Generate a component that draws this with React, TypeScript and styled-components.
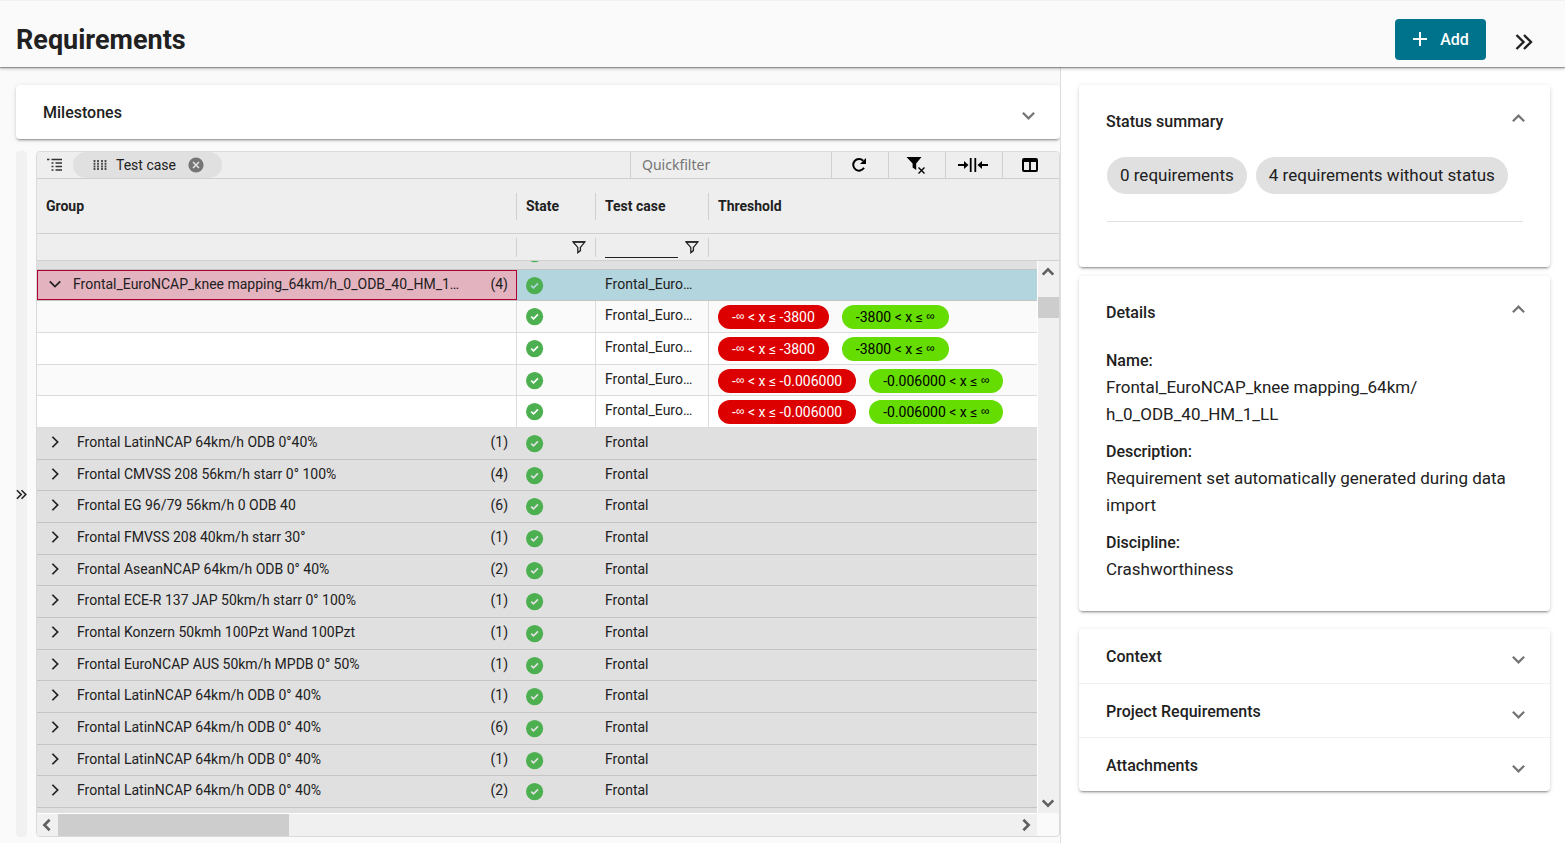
import React from 'react';
import styled, { createGlobalStyle } from 'styled-components';

const GlobalStyle = createGlobalStyle`
  *, *::before, *::after { box-sizing: border-box; }
  body {
    margin: 0;
    background: #fafafa;
    color: #212121;
    font-family: Roboto, "Liberation Sans", sans-serif;
  }
  button, input { font: inherit; color: inherit; }
  button { border: 0; padding: 0; background: none; cursor: pointer; }
  svg { display: block; flex: none; }
`;

const elevation = `
  box-shadow: 0 3px 1px -2px rgba(0, 0, 0, 0.2), 0 2px 2px 0 rgba(0, 0, 0, 0.14),
    0 1px 5px 0 rgba(0, 0, 0, 0.12);
`;

const Page = styled.div`
  display: flex;
  flex-direction: column;
  height: 100vh;
  min-height: 480px;
`;

const Header = styled.header`
  position: relative;
  z-index: 1;
  display: flex;
  align-items: center;
  flex: none;
  height: 67px;
  padding: 10px 29px 0 16px;
  background: #fafafa;
  border-top: 1px solid #f1f1f1;
  box-shadow: 0 1px 1px rgba(0, 0, 0, 0.3), 0 2px 3px rgba(0, 0, 0, 0.2);
`;

const Title = styled.h1`
  flex: 1;
  margin: 2px 0 0;
  font-size: 27px;
  line-height: 32px;
  font-weight: 700;
`;

const AddButton = styled.button`
  display: flex;
  align-items: center;
  justify-content: center;
  gap: 12px;
  width: 91px;
  height: 41px;
  margin-right: 26px;
  border-radius: 4px;
  background: #00738c;
  color: #fff;
  font-size: 16px;
  font-weight: 500;
`;

const PanelToggle = styled.button`
  display: flex;
  align-items: center;
  justify-content: center;
  width: 24px;
  height: 24px;
  margin-top: 6px;
`;

const Columns = styled.div`
  display: flex;
  flex: 1;
  min-height: 0;
`;

const MainColumn = styled.main`
  display: flex;
  flex: 1;
  flex-direction: column;
  min-width: 0;
  gap: 12px;
  padding: 18px 0 6px 16px;
`;

const SideColumn = styled.aside`
  flex: none;
  width: 505px;
  padding: 18px 15px 16px 18px;
  border-left: 1px solid #dedede;
  background: #fff;
`;

const Card = styled.section<{ $gap?: number }>`
  margin-bottom: ${(p) => p.$gap ?? 0}px;
  border-radius: 4px;
  background: #fff;
  ${elevation}
`;

const PanelButton = styled.button<{ $open?: boolean; $divided?: boolean }>`
  display: flex;
  align-items: center;
  justify-content: space-between;
  width: 100%;
  height: ${(p) => (p.$open ? 71 : 54)}px;
  padding: 2px 24px 0 27px;
  border-top: ${(p) => (p.$divided ? '1px solid #f0f0f0' : '0')};
  font-size: 16px;
  line-height: 24px;
  font-weight: 500;
  text-align: left;
  svg { margin: ${(p) => (p.$open ? '0 0 6px' : '5px 0 0')}; }
`;

const ChipRow = styled.div`
  display: flex;
  gap: 9px;
  margin: 1px 27px 0 28px;
  padding-bottom: 27px;
  border-bottom: 1px solid #e0e0e0;
`;

const StatusChip = styled.span`
  padding: 5px 13px;
  border-radius: 19px;
  background: #e0e0e0;
  font-size: 17px;
  line-height: 27px;
  white-space: nowrap;
`;

const CardFoot = styled.div`
  height: 45px;
`;

const DetailList = styled.dl`
  margin: 0;
  padding: 0 27px 28px;
  font-size: 17px;
  line-height: 27px;
`;

const DetailTerm = styled.dt`
  font-size: 16px;
  font-weight: 500;
`;

const DetailText = styled.dd`
  margin: 0 0 10px;
  &:last-child { margin: 0; }
`;

const Workspace = styled.div`
  display: flex;
  flex: 1;
  min-height: 0;
  gap: 9px;
`;

const Rail = styled.button`
  display: flex;
  align-items: center;
  justify-content: center;
  flex: none;
  width: 11px;
  border-radius: 4px;
  background: #f1f1f1;
`;

const DataGrid = styled.div`
  display: flex;
  flex: 1;
  flex-direction: column;
  min-width: 0;
  overflow: hidden;
  border: 1px solid #dadada;
  border-radius: 4px;
  background: #fafafa;
`;

const Toolbar = styled.div`
  display: flex;
  flex: none;
  height: 27px;
  border-bottom: 1px solid #d0d0d0;
  background: #eee;
`;

const GroupDrop = styled.div`
  display: flex;
  flex: 1;
  align-items: center;
  gap: 10px;
  padding-left: 10px;
`;

const GroupChip = styled.span`
  display: flex;
  align-items: center;
  height: 26px;
  padding: 0 18px 0 20px;
  border-radius: 13px;
  background: #e0e0e0;
  font-size: 14px;
`;

const ChipLabel = styled.span`
  margin: 0 12px 0 9px;
`;

const QuickFilter = styled.input`
  width: 201px;
  padding: 0 11px 2px;
  border: 0;
  border-left: 1px solid #d0d0d0;
  outline: 0;
  background: transparent;
  font-family: "Noto Sans", sans-serif;
  font-size: 14px;
  &::placeholder { color: #757575; opacity: 1; }
`;

const ToolButton = styled.button`
  display: flex;
  align-items: center;
  justify-content: center;
  width: 57px;
  padding-right: 3px;
  border-left: 1px solid #d0d0d0;
  color: #000;
`;

const GridFrame = styled.div`
  display: grid;
  flex: 1;
  grid-template-columns: 1fr 22px;
  grid-template-rows: auto 1fr 23px;
  min-height: 0;
`;

const Table = styled.table`
  display: contents;
  font-size: 14px;
  line-height: 20px;
`;

const rowColumns = `
  display: grid;
  grid-template-columns: 479px 79px 113px 1fr;
`;

const TableHead = styled.thead`
  display: block;
  grid-column: 1 / -1;
  background: #eee;
`;

const TableBody = styled.tbody`
  display: block;
  min-height: 0;
  overflow: hidden;
  background: #e0e0e0;
`;

const HeadRow = styled.tr<{ $filters?: boolean }>`
  ${rowColumns}
  align-items: ${(p) => (p.$filters ? 'start' : 'center')};
  height: ${(p) => (p.$filters ? 27 : 55)}px;
  padding-top: ${(p) => (p.$filters ? 4 : 0)}px;
  border-bottom: 1px solid #d0d0d0;
`;

const HeadCell = styled.th`
  height: 27px;
  padding: 3px 9px;
  font-weight: 700;
  text-align: left;
  & + & { border-left: 1px solid #d0d0d0; }
`;

const FilterCell = styled.td`
  display: flex;
  align-items: flex-start;
  justify-content: flex-end;
  gap: 7px;
  height: 19px;
  padding: 0 9px;
  & + & { border-left: 1px solid #d0d0d0; }
`;

const FilterButton = styled.button`
  padding-top: 2px;
`;

const FilterInput = styled.input`
  flex: 1;
  min-width: 0;
  height: 20px;
  padding: 0;
  border: 0;
  border-bottom: 1px solid #212121;
  outline: 0;
  background: transparent;
`;

type Tone = 'selected' | 'group' | 'odd' | 'even';

const toneColor: Record<Tone, string> = {
  selected: '#b2d5de',
  group: '#e0e0e0',
  odd: '#fafafa',
  even: '#ffffff',
};

const Row = styled.tr<{ $tone: Tone }>`
  ${rowColumns}
  height: 32px;
  border-bottom: 1px solid
    ${(p) => (p.$tone === 'group' || p.$tone === 'selected' ? '#c4c4c4' : '#dcdcdc')};
  background: ${(p) => toneColor[p.$tone]};
  &:nth-child(3n + 2) { height: 31px; }
  &:first-child { margin-top: -23px; }
`;

const Cell = styled.td<{ $ruled?: boolean }>`
  min-width: 0;
  padding: 4px 9px 0;
  overflow: hidden;
  border-left: 1px solid ${(p) => (p.$ruled ? '#dcdcdc' : 'transparent')};
  white-space: nowrap;
  text-overflow: ellipsis;
`;

const StateCell = styled(Cell)`
  padding-top: 7px;
`;

const PillCell = styled(Cell)`
  display: flex;
  gap: 13px;
`;

const GroupCell = styled.td<{ $focused?: boolean }>`
  display: flex;
  align-items: flex-start;
  gap: ${(p) => (p.$focused ? 9 : 13)}px;
  min-width: 0;
  margin-right: ${(p) => (p.$focused ? -1 : 0)}px;
  padding: ${(p) => (p.$focused ? '3px 8px 0 7px' : '4px 8px 0 8px')};
  border: ${(p) => (p.$focused ? '1px solid #b00030' : '0')};
  background: ${(p) => (p.$focused ? '#e4b3c0' : 'transparent')};
`;

const Expander = styled.button`
  display: flex;
  align-items: center;
  justify-content: center;
  flex: none;
  width: 19px;
  height: 20px;
`;

const GroupName = styled.span`
  flex: 1;
  min-width: 0;
  overflow: hidden;
  white-space: nowrap;
  text-overflow: ellipsis;
`;

const GroupCount = styled.span<{ $wide?: boolean }>`
  margin-left: ${(p) => (p.$wide ? 16 : 0)}px;
`;

const Pill = styled.span<{ $pass?: boolean }>`
  height: 24px;
  padding: 2px 14px;
  border-radius: 12px;
  background: ${(p) => (p.$pass ? '#66dd00' : '#dd0000')};
  color: ${(p) => (p.$pass ? '#000' : '#fff')};
`;

const Infinite = styled.span`
  font-family: "Liberation Sans", sans-serif;
  font-size: 12px;
  line-height: 12px;
  vertical-align: 2px;
`;

const VerticalBar = styled.div`
  display: flex;
  flex-direction: column;
  align-items: flex-start;
  border-left: 1px solid #fff;
  background: #f0f0f0;
`;

const HorizontalBar = styled.div`
  display: flex;
  align-items: stretch;
  border-top: 1px solid #fff;
  background: #f0f0f0;
`;

const BarButton = styled.button`
  display: flex;
  align-items: center;
  justify-content: center;
  flex: none;
  width: 21px;
  height: 21px;
  padding-right: 1px;
`;

const BarTrack = styled.div<{ $vertical?: boolean }>`
  display: flex;
  flex: 1;
  flex-direction: ${(p) => (p.$vertical ? 'column' : 'row')};
  align-self: stretch;
  padding-top: ${(p) => (p.$vertical ? 15 : 0)}px;
`;

const BarThumb = styled.div<{ $vertical?: boolean }>`
  width: ${(p) => (p.$vertical ? 'auto' : '231px')};
  height: ${(p) => (p.$vertical ? '21px' : 'auto')};
  background: #cdcdcd;
`;

const turns = { right: 0, down: 90, left: 180, up: 270 };

function Chevron({
  to,
  size,
  width = 2,
  color = '#757575',
}: {
  to: keyof typeof turns;
  size: number;
  width?: number;
  color?: string;
}) {
  return (
    <svg width={size} height={size} viewBox="0 0 16 16" fill="none" aria-hidden="true">
      <path
        d="M5 2l6 6-6 6"
        stroke={color}
        strokeWidth={width}
        transform={`rotate(${turns[to]} 8 8)`}
      />
    </svg>
  );
}

function DoubleChevron({ size, width }: { size: number; width: number }) {
  return (
    <svg width={size} height={size} viewBox="0 0 18 18" fill="none" aria-hidden="true">
      <path d="M1.5 2l7 7-7 7M9 2l7 7-7 7" stroke="#212121" strokeWidth={width} />
    </svg>
  );
}

function CheckCircle({ mark }: { mark: string }) {
  return (
    <svg width="18" height="18" viewBox="0 0 18 18" role="img" aria-label="OK">
      <circle cx="8.6" cy="8.6" r="8.6" fill="#4caf50" />
      <path d="M5.2 8.600l2.300 2.300 4.500-4.600" fill="none" stroke={mark} strokeWidth="1.700" />
    </svg>
  );
}

function FilterOutline() {
  return (
    <svg width="14" height="14" viewBox="0 0 14 14" fill="none" aria-hidden="true">
      <path d="M1 1.8h12L8.4 7.4v3.2l-2.6 2V7.4z" stroke="#212121" strokeWidth="1.3" />
      <path d="M1 2h12" stroke="#212121" strokeWidth="1.6" />
    </svg>
  );
}

function TreeIcon() {
  return (
    <svg width="16" height="16" viewBox="0 0 16 16" aria-hidden="true">
      <path
        d="M0 2.500h2.500M4.500 2.500H15M4.500 6h2M8.500 6H15M4.500 9.500h2M8.500 9.500H15M4.500 13h2M8.500 13H15"
        stroke="#333"
        strokeWidth="1.5"
      />
    </svg>
  );
}

function GripIcon() {
  return (
    <svg width="14" height="12" viewBox="0 0 14 12" aria-hidden="true">
      <path
        d="M1.500 1v10M5 1v10M9 1v10M12.500 1v10"
        stroke="#444"
        strokeWidth="1.8"
        strokeDasharray="2 .7"
      />
    </svg>
  );
}

function CloseCircle() {
  return (
    <svg width="16" height="16" viewBox="0 0 16 16" aria-hidden="true">
      <circle cx="8" cy="8" r="7.6" fill="#757575" />
      <path d="M5 5l6 6M11 5l-6 6" stroke="#e0e0e0" strokeWidth="1.6" />
    </svg>
  );
}

function RefreshIcon() {
  return (
    <svg width="16" height="16" viewBox="0 0 16 16" fill="none" aria-hidden="true">
      <path d="M13 10.800A5.800 5.800 0 1 1 12.200 3.800" stroke="#000" strokeWidth="2" />
      <path d="M15 1v6H9z" fill="#000" />
    </svg>
  );
}

function ClearFilterIcon() {
  return (
    <svg width="20" height="18" viewBox="0 0 20 18" aria-hidden="true">
      <path d="M.5 1h15l-5.300 6.500v6.500l-3.600-2.500v-4z" fill="#000" />
      <path d="M12.500 11.500l6 6M18.500 11.500l-6 6" stroke="#000" strokeWidth="1.400" />
    </svg>
  );
}

function FitColumnsIcon() {
  return (
    <svg width="32" height="14" viewBox="0 0 32 14" aria-hidden="true">
      <path d="M13.700 0v14M18.300 0v14" stroke="#000" strokeWidth="1.800" />
      <path d="M1 7h7M31 7h-7" stroke="#000" strokeWidth="2.200" />
      <path d="M7 3l4.500 4L7 11zM25 3l-4.500 4 4.500 4z" fill="#000" />
    </svg>
  );
}

function ColumnsIcon() {
  return (
    <svg width="16" height="14" viewBox="0 0 16 14" fill="none" aria-hidden="true">
      <rect x="1" y="1" width="14" height="12" rx="1" stroke="#000" strokeWidth="2" />
      <path d="M1 2.500h14" stroke="#000" strokeWidth="3" />
      <path d="M8 3v10" stroke="#000" strokeWidth="1.800" />
    </svg>
  );
}

const limits = ['3800', '3800', '0.006000', '0.006000'];

const groups: Array<[string, number]> = [
  ['Frontal LatinNCAP 64km/h ODB 0°40%', 1],
  ['Frontal CMVSS 208 56km/h starr 0° 100%', 4],
  ['Frontal EG 96/79 56km/h 0 ODB 40', 6],
  ['Frontal FMVSS 208 40km/h starr 30°', 1],
  ['Frontal AseanNCAP 64km/h ODB 0° 40%', 2],
  ['Frontal ECE-R 137 JAP 50km/h starr 0° 100%', 1],
  ['Frontal Konzern 50kmh 100Pzt Wand 100Pzt', 1],
  ['Frontal EuroNCAP AUS 50km/h MPDB 0° 50%', 1],
  ['Frontal LatinNCAP 64km/h ODB 0° 40%', 1],
  ['Frontal LatinNCAP 64km/h ODB 0° 40%', 6],
  ['Frontal LatinNCAP 64km/h ODB 0° 40%', 1],
  ['Frontal LatinNCAP 64km/h ODB 0° 40%', 2],
];

function RequirementsTable() {
  return (
    <Table>
      <TableHead>
        <HeadRow>
          <HeadCell scope="col">Group</HeadCell>
          <HeadCell scope="col">State</HeadCell>
          <HeadCell scope="col">Test case</HeadCell>
          <HeadCell scope="col">Threshold</HeadCell>
        </HeadRow>
        <HeadRow $filters>
          <FilterCell />
          <FilterCell>
            <FilterButton aria-label="Filter state"><FilterOutline /></FilterButton>
          </FilterCell>
          <FilterCell>
            <FilterInput aria-label="Test case filter" />
            <FilterButton aria-label="Filter test case"><FilterOutline /></FilterButton>
          </FilterCell>
          <FilterCell />
        </HeadRow>
      </TableHead>
      <TableBody>
        <Row $tone="group">
          <Cell />
          <StateCell><CheckCircle mark={toneColor.group} /></StateCell>
          <Cell />
          <Cell />
        </Row>
        <Row $tone="selected">
          <GroupCell $focused>
            <Expander aria-label="Collapse group">
              <Chevron to="down" size={14} color="#212121" />
            </Expander>
            <GroupName>Frontal_EuroNCAP_knee mapping_64km/h_0_ODB_40_HM_1_LL</GroupName>
            <GroupCount $wide>(4)</GroupCount>
          </GroupCell>
          <StateCell><CheckCircle mark={toneColor.selected} /></StateCell>
          <Cell>Frontal_EuroNCAP</Cell>
          <Cell />
        </Row>
        {limits.map((limit, i) => {
          const tone: Tone = i % 2 ? 'even' : 'odd';
          return (
            <Row key={i} $tone={tone}>
              <Cell />
              <StateCell $ruled><CheckCircle mark="#fff" /></StateCell>
              <Cell $ruled>Frontal_EuroNCAP</Cell>
              <PillCell $ruled>
                <Pill>-<Infinite>∞</Infinite>{` < x ≤ -${limit}`}</Pill>
                <Pill $pass>{`-${limit} < x ≤ `}<Infinite>∞</Infinite></Pill>
              </PillCell>
            </Row>
          );
        })}
        {groups.map(([name, count], i) => (
          <Row key={i} $tone="group">
            <GroupCell>
              <Expander aria-label="Expand group">
                <Chevron to="right" size={14} color="#212121" />
              </Expander>
              <GroupName>{name}</GroupName>
              <GroupCount>({count})</GroupCount>
            </GroupCell>
            <StateCell><CheckCircle mark={toneColor.group} /></StateCell>
            <Cell>Frontal</Cell>
            <Cell />
          </Row>
        ))}
      </TableBody>
    </Table>
  );
}

export default function App() {
  return (
    <Page>
      <GlobalStyle />
      <Header>
        <Title>Requirements</Title>
        <AddButton>
          <svg width="16" height="16" viewBox="0 0 16 16" aria-hidden="true">
            <path d="M8 1v14M1 8h14" stroke="#fff" strokeWidth="2" />
          </svg>
          Add
        </AddButton>
        <PanelToggle aria-label="Hide side panel"><DoubleChevron size={18} width={2.4} /></PanelToggle>
      </Header>
      <Columns>
        <MainColumn>
          <Card>
            <PanelButton aria-expanded="false">
              Milestones
              <Chevron to="down" size={15} width={2.4} />
            </PanelButton>
          </Card>
          <Workspace>
            <Rail aria-label="Show filters"><DoubleChevron size={11} width={2.6} /></Rail>
            <DataGrid>
              <Toolbar>
                <GroupDrop>
                  <TreeIcon />
                  <GroupChip>
                    <GripIcon />
                    <ChipLabel>Test case</ChipLabel>
                    <button aria-label="Remove grouping"><CloseCircle /></button>
                  </GroupChip>
                </GroupDrop>
                <QuickFilter aria-label="Quickfilter" placeholder="Quickfilter" />
                <ToolButton aria-label="Refresh"><RefreshIcon /></ToolButton>
                <ToolButton aria-label="Clear filters"><ClearFilterIcon /></ToolButton>
                <ToolButton aria-label="Fit columns"><FitColumnsIcon /></ToolButton>
                <ToolButton aria-label="Choose columns"><ColumnsIcon /></ToolButton>
              </Toolbar>
              <GridFrame>
                <RequirementsTable />
                <VerticalBar>
                  <BarButton aria-label="Scroll up">
                    <Chevron to="up" size={14} width={3} color="#606060" />
                  </BarButton>
                  <BarTrack $vertical><BarThumb $vertical /></BarTrack>
                  <BarButton aria-label="Scroll down">
                    <Chevron to="down" size={14} width={3} color="#606060" />
                  </BarButton>
                </VerticalBar>
                <HorizontalBar>
                  <BarButton aria-label="Scroll left">
                    <Chevron to="left" size={14} width={3} color="#606060" />
                  </BarButton>
                  <BarTrack><BarThumb /></BarTrack>
                  <BarButton aria-label="Scroll right">
                    <Chevron to="right" size={14} width={3} color="#606060" />
                  </BarButton>
                </HorizontalBar>
              </GridFrame>
            </DataGrid>
          </Workspace>
        </MainColumn>
        <SideColumn>
          <Card $gap={9}>
            <PanelButton $open aria-expanded="true">
              Status summary
              <Chevron to="up" size={15} width={2.4} />
            </PanelButton>
            <ChipRow>
              <StatusChip>0 requirements</StatusChip>
              <StatusChip>4 requirements without status</StatusChip>
            </ChipRow>
            <CardFoot />
          </Card>
          <Card $gap={18}>
            <PanelButton $open aria-expanded="true">
              Details
              <Chevron to="up" size={15} width={2.4} />
            </PanelButton>
            <DetailList>
              <DetailTerm>Name:</DetailTerm>
              <DetailText>Frontal_EuroNCAP_knee mapping_64km/<wbr />h_0_ODB_40_HM_1_LL</DetailText>
              <DetailTerm>Description:</DetailTerm>
              <DetailText>Requirement set automatically generated during data import</DetailText>
              <DetailTerm>Discipline:</DetailTerm>
              <DetailText>Crashworthiness</DetailText>
            </DetailList>
          </Card>
          <Card>
            <PanelButton aria-expanded="false">
              Context
              <Chevron to="down" size={15} width={2.4} />
            </PanelButton>
            <PanelButton $divided aria-expanded="false">
              Project Requirements
              <Chevron to="down" size={15} width={2.4} />
            </PanelButton>
            <PanelButton $divided aria-expanded="false">
              Attachments
              <Chevron to="down" size={15} width={2.4} />
            </PanelButton>
          </Card>
        </SideColumn>
      </Columns>
    </Page>
  );
}
